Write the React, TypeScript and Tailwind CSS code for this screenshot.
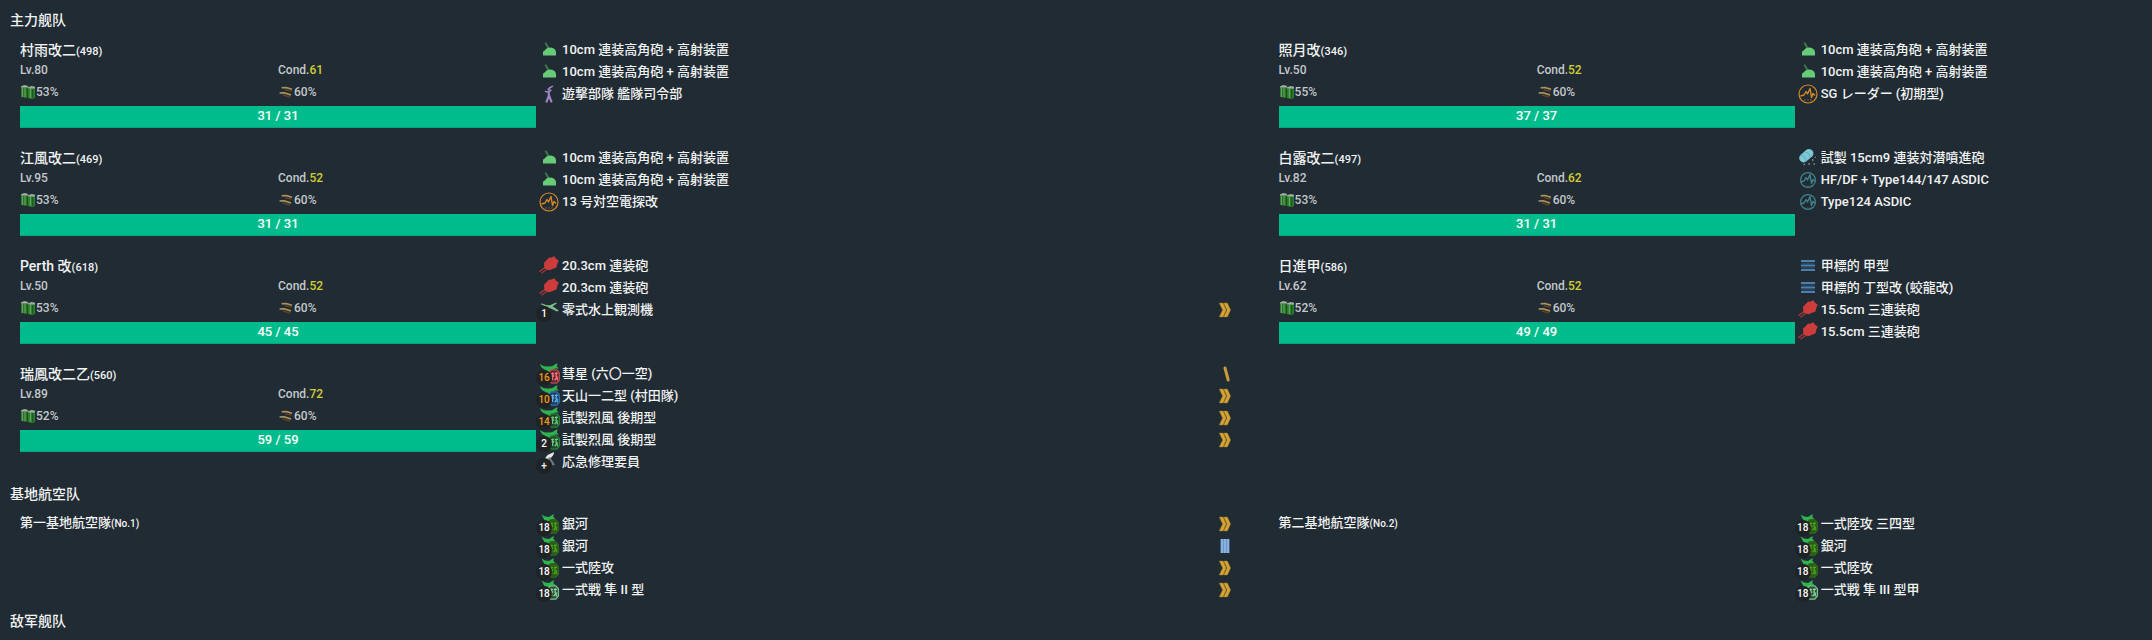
import React from "react";

type IconName =
  | "highAngle" | "command" | "radar" | "gun" | "seaplane" | "bomber" | "torpedo" | "fighter"
  | "repair" | "landAttack" | "landFighter" | "asw" | "sonar" | "midget";
type Level = "max" | "slash" | "bars";
interface Equip { icon: IconName; name: string; count?: string; used?: boolean; level?: Level }
interface Ship { name: string; id: string; lv: number; cond: number; fuel: number; ammo: number; hp: string; equips: Equip[] }
interface Squad { name: string; id: string; equips: Equip[] }

const highAngle: Equip = { icon: "highAngle", name: "10cm 連装高角砲 + 高射装置" };

const ships: Ship[] = [
  { name: "村雨改二", id: "498", lv: 80, cond: 61, fuel: 53, ammo: 60, hp: "31 / 31", equips: [highAngle, highAngle, { icon: "command", name: "遊撃部隊 艦隊司令部" }] },
  { name: "照月改", id: "346", lv: 50, cond: 52, fuel: 55, ammo: 60, hp: "37 / 37", equips: [highAngle, highAngle, { icon: "radar", name: "SG レーダー (初期型)" }] },
  { name: "江風改二", id: "469", lv: 95, cond: 52, fuel: 53, ammo: 60, hp: "31 / 31", equips: [highAngle, highAngle, { icon: "radar", name: "13 号対空電探改" }] },
  { name: "白露改二", id: "497", lv: 82, cond: 62, fuel: 53, ammo: 60, hp: "31 / 31", equips: [{ icon: "asw", name: "試製 15cm9 連装対潜噴進砲" }, { icon: "sonar", name: "HF/DF + Type144/147 ASDIC" }, { icon: "sonar", name: "Type124 ASDIC" }] },
  { name: "Perth 改", id: "618", lv: 50, cond: 52, fuel: 53, ammo: 60, hp: "45 / 45", equips: [{ icon: "gun", name: "20.3cm 連装砲" }, { icon: "gun", name: "20.3cm 連装砲" }, { icon: "seaplane", name: "零式水上観測機", count: "1", level: "max" }] },
  { name: "日進甲", id: "586", lv: 62, cond: 52, fuel: 52, ammo: 60, hp: "49 / 49", equips: [{ icon: "midget", name: "甲標的 甲型" }, { icon: "midget", name: "甲標的 丁型改 (蛟龍改)" }, { icon: "gun", name: "15.5cm 三連装砲" }, { icon: "gun", name: "15.5cm 三連装砲" }] },
  {
    name: "瑞鳳改二乙", id: "560", lv: 89, cond: 72, fuel: 52, ammo: 60, hp: "59 / 59",
    equips: [
      { icon: "bomber", name: "彗星 (六〇一空)", count: "16", used: true, level: "slash" },
      { icon: "torpedo", name: "天山一二型 (村田隊)", count: "10", used: true, level: "max" },
      { icon: "fighter", name: "試製烈風 後期型", count: "14", used: true, level: "max" },
      { icon: "fighter", name: "試製烈風 後期型", count: "2", level: "max" },
      { icon: "repair", name: "応急修理要員", count: "+" },
    ],
  },
];

const squads: Squad[] = [
  {
    name: "第一基地航空隊", id: "No.1",
    equips: [
      { icon: "landAttack", name: "銀河", count: "18", level: "max" },
      { icon: "landAttack", name: "銀河", count: "18", level: "bars" },
      { icon: "landAttack", name: "一式陸攻", count: "18", level: "max" },
      { icon: "landFighter", name: "一式戦 隼 II 型", count: "18", level: "max" },
    ],
  },
  {
    name: "第二基地航空隊", id: "No.2",
    equips: [
      { icon: "landAttack", name: "一式陸攻 三四型", count: "18", level: "max" },
      { icon: "landAttack", name: "銀河", count: "18", level: "max" },
      { icon: "landAttack", name: "一式陸攻", count: "18", level: "max" },
      { icon: "landFighter", name: "一式戦 隼 III 型甲", count: "18", level: "max" },
    ],
  },
];

function Wave({ color, r }: { color: string; r: number }) {
  return (
    <g fill="none" stroke={color} strokeLinejoin="round">
      <circle cx="10" cy="10" r={r} strokeWidth="1.2" />
      <path d="M2.5 12 L6 11 L8 7.5 L9.5 10 L12 4.5 L13.5 13.5 L15 9.5 L17 11.5" strokeWidth="1.4" />
      <path d="M6 16h8" strokeWidth="0.7" strokeDasharray="2 1" opacity="0.7" />
    </g>
  );
}

const navalBody = "M0.6 0 L5 2.2 L9 2.6 L13 2.2 L17.6 -0.6 L18.6 -0.4 L17.8 2.4 L19.8 4.4 L16 4.6 L13 6.4 L12 8 H7 L0.8 8.6 L4.600 6.800 L7.400 6.400 L3 4 Z";
const landBody = "M2.6 0.6 L6 2.6 L10 3 L14.8 0 L14.4 3 L16.4 5 L13 5.6 L11.4 8 H6 L1.6 8.4 L5.600 6.200 L4 3.6 Z";

function Plane({ ring, mark, fill, land }: { ring: string; mark: string; fill: string; land?: boolean }) {
  return (
    <g>
      <path d={land ? landBody : navalBody} fill="#31b350" />
      <path
        transform={land ? "translate(-1 0)" : undefined}
        d="M12.4 5.800h5.400l2.600 3v7.200l-2.600 3.200h-5.400l-2.600-3.200v-7.200z"
        fill={fill}
        stroke={ring}
        strokeWidth="1.3"
      />
      <path
        transform={land ? "translate(-1 0)" : undefined}
        d="M12.200 9.600h3M12.200 12h3M13.600 8.600v7.400M16 9.400h3M17.400 8.400l-.4 4 1.800 3.800M18.800 12.600l-3.200 3.600"
        fill="none"
        stroke={mark}
        strokeWidth="1.3"
      />
    </g>
  );
}

function EquipIcon({ name }: { name: IconName }) {
  return (
    <svg viewBox="0 0 20 20" className="size-5 shrink-0 overflow-visible" aria-hidden="true">
      {name === "highAngle" && (
        <g>
          <path d="M6.4 2.6 L9.4 8" stroke="#3d7a4b" strokeWidth="1.9" />
          <path d="M4 15.600v-4c2-.6 2.600-4 6.600-4.200 3.800 0 6 1.600 6.400 4.600v3.600z" fill="#66cc77" />
        </g>
      )}
      {name === "command" && (
        <g fill="none" stroke="#9f83c4" strokeLinecap="round">
          <circle cx="9.8" cy="5.400" r="1.300" fill="#9f83c4" stroke="none" />
          <path d="M6.400 7.400 L9.800 8 L12 6.200" strokeWidth="1.500" />
          <path d="M10.400 4 L13.400 2.400" strokeWidth="1.500" />
          <path d="M9.800 8v4L7.600 17.600M10.200 12l2.200 5.600" strokeWidth="2.200" />
        </g>
      )}
      {name === "radar" && <Wave color="#d68a26" r={9} />}
      {name === "sonar" && <Wave color="#41828c" r={7.4} />}
      {name === "gun" && (
        <g>
          <path d="M0.4 15.600 L6.400 11.400M2.400 17.200 L8.400 13" stroke="#9e3636" strokeWidth="1.400" />
          <path d="M5 6.800 L10.200 1.400 L12 1.800 L15.400 .2 L16.600 2.200 L19.800 4.800 L18.400 7.600 L17.400 11.400 L10.400 14.200 L5.400 12.400Z" fill="#cd3c3c" />
        </g>
      )}
      {name === "seaplane" && (
        <path d="M1.400 4 L3 3.400 L7 5 L11 5.200 L17 2.400 L17.800 3.400 L13.600 6.200 L19.800 10.400 L18 11.400 L11.400 8.200 L8 10.600 H-1 L5 8 L7 6.600Z" fill="#7cbf8d" />
      )}
      {name === "bomber" && <Plane ring="#b54a4f" mark="#ff7077" fill="#5e2d34" />}
      {name === "torpedo" && <Plane ring="#2e70ad" mark="#62b0f2" fill="#213f5e" />}
      {name === "fighter" && <Plane ring="#2a8039" mark="#6fc47e" fill="#1f4a2a" />}
      {name === "landAttack" && <Plane land ring="#33641d" mark="#4aa51c" fill="#2a5a16" />}
      {name === "landFighter" && <Plane land ring="#7cc08e" mark="#8fd3a0" fill="#2b5138" />}
      {name === "repair" && (
        <g>
          <path d="M4 8.800 L8.600 3 L15 0 L14.400 3 L9.600 8.400 L6 11.400Z" fill="#e8e8e8" />
          <path d="M10 5.600 L14.800 13.200" stroke="#77797c" strokeWidth="2.400" />
        </g>
      )}
      {name === "asw" && (
        <g>
          <path d="M5.600 10 L11 5.400" stroke="#7cc8d6" strokeWidth="8.800" strokeLinecap="round" />
          <path d="M3 7.200c3 .2 5 3 4.800 6.400M7.400 4c3 .4 5 3.200 4.600 6" stroke="#56a3b3" strokeWidth=".8" fill="none" />
          <path d="M14 12h1.400M16.600 9.400h1M5.600 16.400h1.400M10.400 16h1.400M15.600 16h1.200" stroke="#8aa4ac" strokeWidth="1.300" />
        </g>
      )}
      {name === "midget" && (
        <g>
          <path d="M3 5h14M3 9.500h14M3 14h14" stroke="#4a7fae" strokeWidth="1.800" />
          <path d="M3.600 7.200h12.800M3.600 11.800h12.800" stroke="#2f4d66" strokeWidth="1.200" />
        </g>
      )}
    </svg>
  );
}

function LevelIcon({ level }: { level: Level }) {
  return (
    <svg viewBox="0 0 14 16" className="h-4 w-3.5" role="img" aria-label="Proficiency">
      {level === "max" && (
        <g fill="#d6a433" stroke="#8f7130" strokeWidth=".5">
          <path d="M1.200 1h4l3 7-3 7h-4l3.400-7z" />
          <path d="M5.600 1h3.800l3.200 7-3.200 7H5.600L9 8z" />
        </g>
      )}
      {level === "slash" && <path d="M7 2 L10.200 14" stroke="#c99c36" strokeWidth="3" strokeLinecap="round" />}
      {level === "bars" && (
        <g>
          <path d="M2.500 1h9v14h-9z" fill="#6b96ca" />
          <path d="M4 1v14M7 1v14M10 1v14" stroke="#8cb0dc" strokeWidth="2" />
        </g>
      )}
    </svg>
  );
}

function FuelIcon() {
  return (
    <svg viewBox="0 0 16 16" className="size-4" aria-hidden="true">
      <path d="M1 2h7v12l-7-1z" fill="#2a7429" />
      <path d="M8 2.800h7v11.400l-3.400.8L8 14z" fill="#2a8029" />
      <path d="M1 2.600 4 1l3.800.8v1.800H1zM8 3.600l3.400-1.600 3.600.8v1.600H8z" fill="#a3ada3" />
      <path d="M2.400 4v9M5 4v9.400M10.400 5v9" stroke="#7fb07f" strokeWidth=".8" />
      <path d="M7.600 4v10M12.800 5v9" stroke="#1d4a1d" strokeWidth="1" />
    </svg>
  );
}

function AmmoIcon() {
  return (
    <svg viewBox="0 0 16 16" className="size-4" aria-hidden="true">
      <path d="M3 3 8 2.600l6.600 1.600-.4 3.400-5-.6zM1 8.600l5-.8 7.600 2-.8 3.400-5-1.400z" fill="#3f311b" />
      <path d="M3.600 3.800 8 3.600l6 1.600M1.600 9l4.600-.2 6.800 2.200" fill="none" stroke="#a8946a" strokeWidth="1.600" />
      <path d="M7 5.800l6.400 1.400M5 11.200l7 2" stroke="#5a4724" strokeWidth="1.200" />
    </svg>
  );
}

function Card({ stats, equips }: { stats: React.ReactNode; equips: Equip[] }) {
  return (
    <article className="flex w-1/2 px-2.5">
      <div className="w-5/12">{stats}</div>
      <ul className="w-7/12 pt-px pr-[27px] text-[13px]">
        {equips.map((e, i) => (
          <li key={i} className="flex h-[22px] items-center pl-[3px]">
            <span className="relative flex">
              <EquipIcon name={e.icon} />
              {e.count && (
                <span className={`absolute top-1.5 -left-[3px] flex size-4 items-center justify-center rounded-full bg-[#1f2326] text-[10px] leading-4 ${e.used ? "text-[#f39c12]" : "text-white"}`}>
                  {e.count}
                </span>
              )}
            </span>
            <span className="ml-[3px] flex-1 whitespace-nowrap">{e.name}</span>
            {e.level && <LevelIcon level={e.level} />}
          </li>
        ))}
      </ul>
    </article>
  );
}

function ShipStats({ ship }: { ship: Ship }) {
  return (
    <>
      <h3 className="h-[22px] text-sm leading-6">
        {ship.name}
        <span className="text-[11px]">({ship.id})</span>
      </h3>
      <div className="mb-0.5 grid grid-cols-2 text-xs text-[#c3c8cb]">
        <span className="leading-5">Lv.{ship.lv}</span>
        <span className="leading-5">
          Cond.<span className="text-[#d1ce35]">{ship.cond}</span>
        </span>
        <span className="flex h-6 items-center">
          <FuelIcon />
          {ship.fuel}%
        </span>
        <span className="flex h-6 items-center">
          <AmmoIcon />
          {ship.ammo}%
        </span>
      </div>
      <div className="h-[22px] border-b border-[#04a47e] bg-[#00bc8c] text-center text-[13px] leading-5 text-white">{ship.hp}</div>
    </>
  );
}

export default function App() {
  return (
    <main className="min-h-screen overflow-hidden bg-[#212b33] font-[Roboto,'Noto_Sans_CJK_JP',sans-serif] font-medium text-[#f1f3f4]">
      <div className="w-[117.9%] px-2.5 pt-0.5">
        <h2 className="h-9 text-sm leading-9">主力舰队</h2>
        <section className="flex flex-wrap gap-y-[18px]">
          {ships.map((s) => (
            <Card key={s.id} stats={<ShipStats ship={s} />} equips={s.equips} />
          ))}
        </section>
        <h2 className="mt-[3px] h-9 text-sm leading-9">基地航空队</h2>
        <section className="flex flex-wrap">
          {squads.map((q) => (
            <Card
              key={q.id}
              stats={
                <h3 className="text-[13px] leading-[22px]">
                  {q.name}
                  <span className="text-[10px]">({q.id})</span>
                </h3>
              }
              equips={q.equips}
            />
          ))}
        </section>
        <h2 className="mt-1 h-8 text-sm leading-8">敌军舰队</h2>
      </div>
    </main>
  );
}
